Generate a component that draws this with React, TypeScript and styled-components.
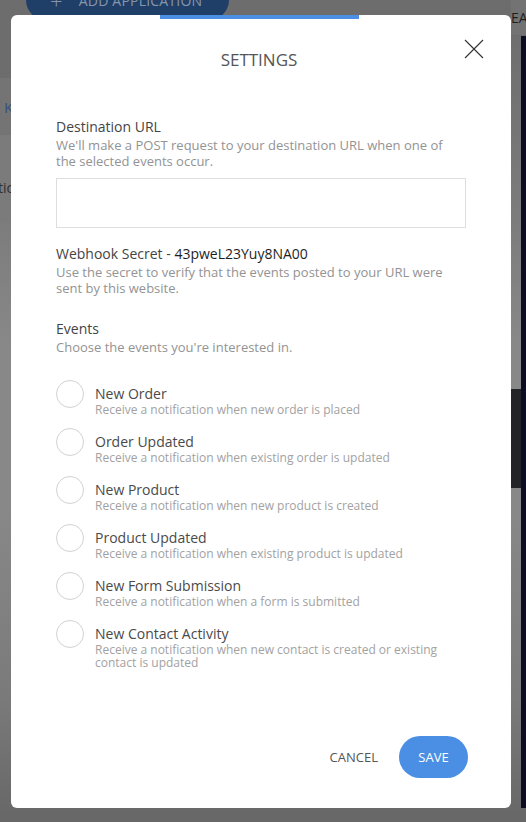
import React from "react";
import styled, { createGlobalStyle } from "styled-components";

const GlobalStyle = createGlobalStyle`
  html, body { margin: 0; padding: 0; height: 100%; }
  body { font-family: "Open Sans", "Liberation Sans", sans-serif; overflow: hidden; }
  * { box-sizing: border-box; }
`;

const Page = styled.div`
  position: relative;
  width: 100vw;
  height: 100vh;
  overflow: hidden;
  display: flex;
  background: linear-gradient(
    to bottom,
    #6c6c6c 0%,
    #737373 12%,
    #7d7d7d 28%,
    #888888 42%,
    #888888 62%,
    #7a7a7a 85%,
    #676767 100%
  );
`;

const LeftArea = styled.div`
  flex: 1;
  display: flex;
  flex-direction: column;
`;

const TopBar = styled.div`
  height: 78px;
  padding-left: 26px;
  background: #6d6d6d;
`;

const AddButton = styled.div`
  margin-top: -20px;
  width: 203px;
  height: 40px;
  border-radius: 20px;
  background: #1f3f68;
  color: #8796ab;
  font-size: 14px;
  display: flex;
  align-items: center;
  gap: 16px;
  padding-left: 24px;
  letter-spacing: 0.2px;
`;

const Plus = styled.span`
  font-size: 22px;
  font-weight: 300;
`;

const TabRow = styled.div`
  height: 57px;
  background: #747474;
  display: flex;
  align-items: center;
  padding-left: 4px;
  color: #34527a;
  font-size: 15px;
`;

const SectionRow = styled.div`
  height: 88px;
  background: #7b7b7b;
  display: flex;
  align-items: center;
  color: #2e2e2e;
  font-size: 14px;
  padding-top: 16px;
  margin-left: -2px;
`;

const RightArea = styled.div`
  width: 15px;
  display: flex;
  flex-direction: column;
`;

const RightHeader = styled.div`
  height: 36px;
  background: #737373;
  color: #1f1f1f;
  font-size: 14px;
  padding-top: 8px;
  white-space: nowrap;
  overflow: hidden;
  border-bottom: 1px dashed #6a6a6a;
`;

const RightBody = styled.div`
  flex: 1;
  display: flex;
  flex-direction: column;
  border-right: 5px solid #0c0d24;
  margin-bottom: 14px;
`;

const RightFill = styled.div<{ $h: number; $bg: string }>`
  height: ${(p) => p.$h}px;
  background: ${(p) => p.$bg};
`;

const Modal = styled.div`
  position: absolute;
  left: 11px;
  top: 15px;
  width: 500px;
  height: 793px;
  background: #ffffff;
  border-radius: 6px;
  display: flex;
  flex-direction: column;
`;

const AccentBar = styled.div`
  align-self: center;
  width: 199px;
  height: 4px;
  background: #4a8fe3;
  margin-right: 3px;
`;

const Title = styled.h2`
  margin: 29px 0 0;
  padding-right: 4px;
  text-align: center;
  font-size: 17px;
  line-height: 24px;
  font-weight: 400;
  color: #555555;
`;

const CloseButton = styled.button`
  position: absolute;
  top: 24px;
  right: 27px;
  width: 20px;
  height: 20px;
  padding: 0;
  border: none;
  background: none;
  display: flex;
  cursor: pointer;
`;

const Body = styled.div`
  margin-top: 45px;
  padding: 0 45px;
  display: flex;
  flex-direction: column;
`;

const FieldLabel = styled.div<{ $gap?: number }>`
  margin-top: ${(p) => p.$gap ?? 0}px;
  font-size: 14px;
  line-height: 20px;
  color: #444444;
`;

const SecretValue = styled.span`
  color: #1e1e1e;
`;

const Help = styled.div`
  max-width: 400px;
  font-size: 13px;
  line-height: 16px;
  color: #939393;
`;

const UrlInput = styled.input`
  margin-top: 9px;
  width: 100%;
  height: 50px;
  border: 1px solid #dedede;
  outline: none;
  padding: 0 12px;
  font-family: inherit;
  font-size: 14px;
`;

const EventList = styled.div`
  margin-top: 25px;
  display: flex;
  flex-direction: column;
  gap: 12px;
`;

const EventRow = styled.label`
  display: flex;
  align-items: flex-start;
  gap: 11px;
  cursor: pointer;
`;

const Radio = styled.span`
  flex: none;
  width: 28px;
  height: 28px;
  border-radius: 50%;
  border: 1px solid #d2d2d2;
`;

const EventText = styled.div`
  padding-top: 5px;
  display: flex;
  flex-direction: column;
  max-width: 360px;
`;

const EventTitle = styled.div`
  font-size: 14px;
  line-height: 18px;
  color: #4a4a4a;
`;

const EventDesc = styled.div`
  font-size: 12px;
  line-height: 13px;
  color: #a2a2a2;
`;

const Footer = styled.div`
  margin-top: auto;
  padding: 0 43px 30px 0;
  display: flex;
  justify-content: flex-end;
  align-items: center;
  gap: 21px;
`;

const TextButton = styled.button`
  border: none;
  background: none;
  padding: 0;
  font-family: inherit;
  font-size: 13px;
  color: #555555;
  cursor: pointer;
`;

const PrimaryButton = styled.button`
  height: 42px;
  min-width: 69px;
  padding: 0 18px;
  border: none;
  border-radius: 21px;
  background: #4a8fe3;
  color: #ffffff;
  font-family: inherit;
  font-size: 13px;
  cursor: pointer;
`;

const events = [
  { title: "New Order", desc: "Receive a notification when new order is placed" },
  { title: "Order Updated", desc: "Receive a notification when existing order is updated" },
  { title: "New Product", desc: "Receive a notification when new product is created" },
  { title: "Product Updated", desc: "Receive a notification when existing product is updated" },
  { title: "New Form Submission", desc: "Receive a notification when a form is submitted" },
  {
    title: "New Contact Activity",
    desc: "Receive a notification when new contact is created or existing contact is updated",
  },
];

export default function App() {
  return (
    <>
      <GlobalStyle />
      <Page>
        <LeftArea>
          <TopBar>
            <AddButton>
              <Plus>+</Plus>
              <span>ADD APPLICATION</span>
            </AddButton>
          </TopBar>
          <TabRow>KEYS</TabRow>
          <SectionRow>tic</SectionRow>
        </LeftArea>
        <RightArea>
          <RightHeader>EADS</RightHeader>
          <RightBody>
            <RightFill $h={353} $bg="transparent" />
            <RightFill $h={99} $bg="#222427" />
          </RightBody>
        </RightArea>

        <Modal>
          <AccentBar />
          <Title>SETTINGS</Title>
          <CloseButton aria-label="Close">
            <svg width="20" height="20" viewBox="0 0 20 20">
              <path d="M1 1 L19 19 M19 1 L1 19" stroke="#333" strokeWidth="1.1" fill="none" />
            </svg>
          </CloseButton>
          <Body>
            <FieldLabel>Destination URL</FieldLabel>
            <Help>We'll make a POST request to your destination URL when one of the selected events occur.</Help>
            <UrlInput type="text" />
            <FieldLabel $gap={16}>
              Webhook Secret - <SecretValue>43pweL23Yuy8NA00</SecretValue>
            </FieldLabel>
            <Help>Use the secret to verify that the events posted to your URL were sent by this website.</Help>
            <FieldLabel $gap={23}>Events</FieldLabel>
            <Help>Choose the events you're interested in.</Help>
            <EventList>
              {events.map((e) => (
                <EventRow key={e.title}>
                  <Radio />
                  <EventText>
                    <EventTitle>{e.title}</EventTitle>
                    <EventDesc>{e.desc}</EventDesc>
                  </EventText>
                </EventRow>
              ))}
            </EventList>
          </Body>
          <Footer>
            <TextButton>CANCEL</TextButton>
            <PrimaryButton>SAVE</PrimaryButton>
          </Footer>
        </Modal>
      </Page>
    </>
  );
}
